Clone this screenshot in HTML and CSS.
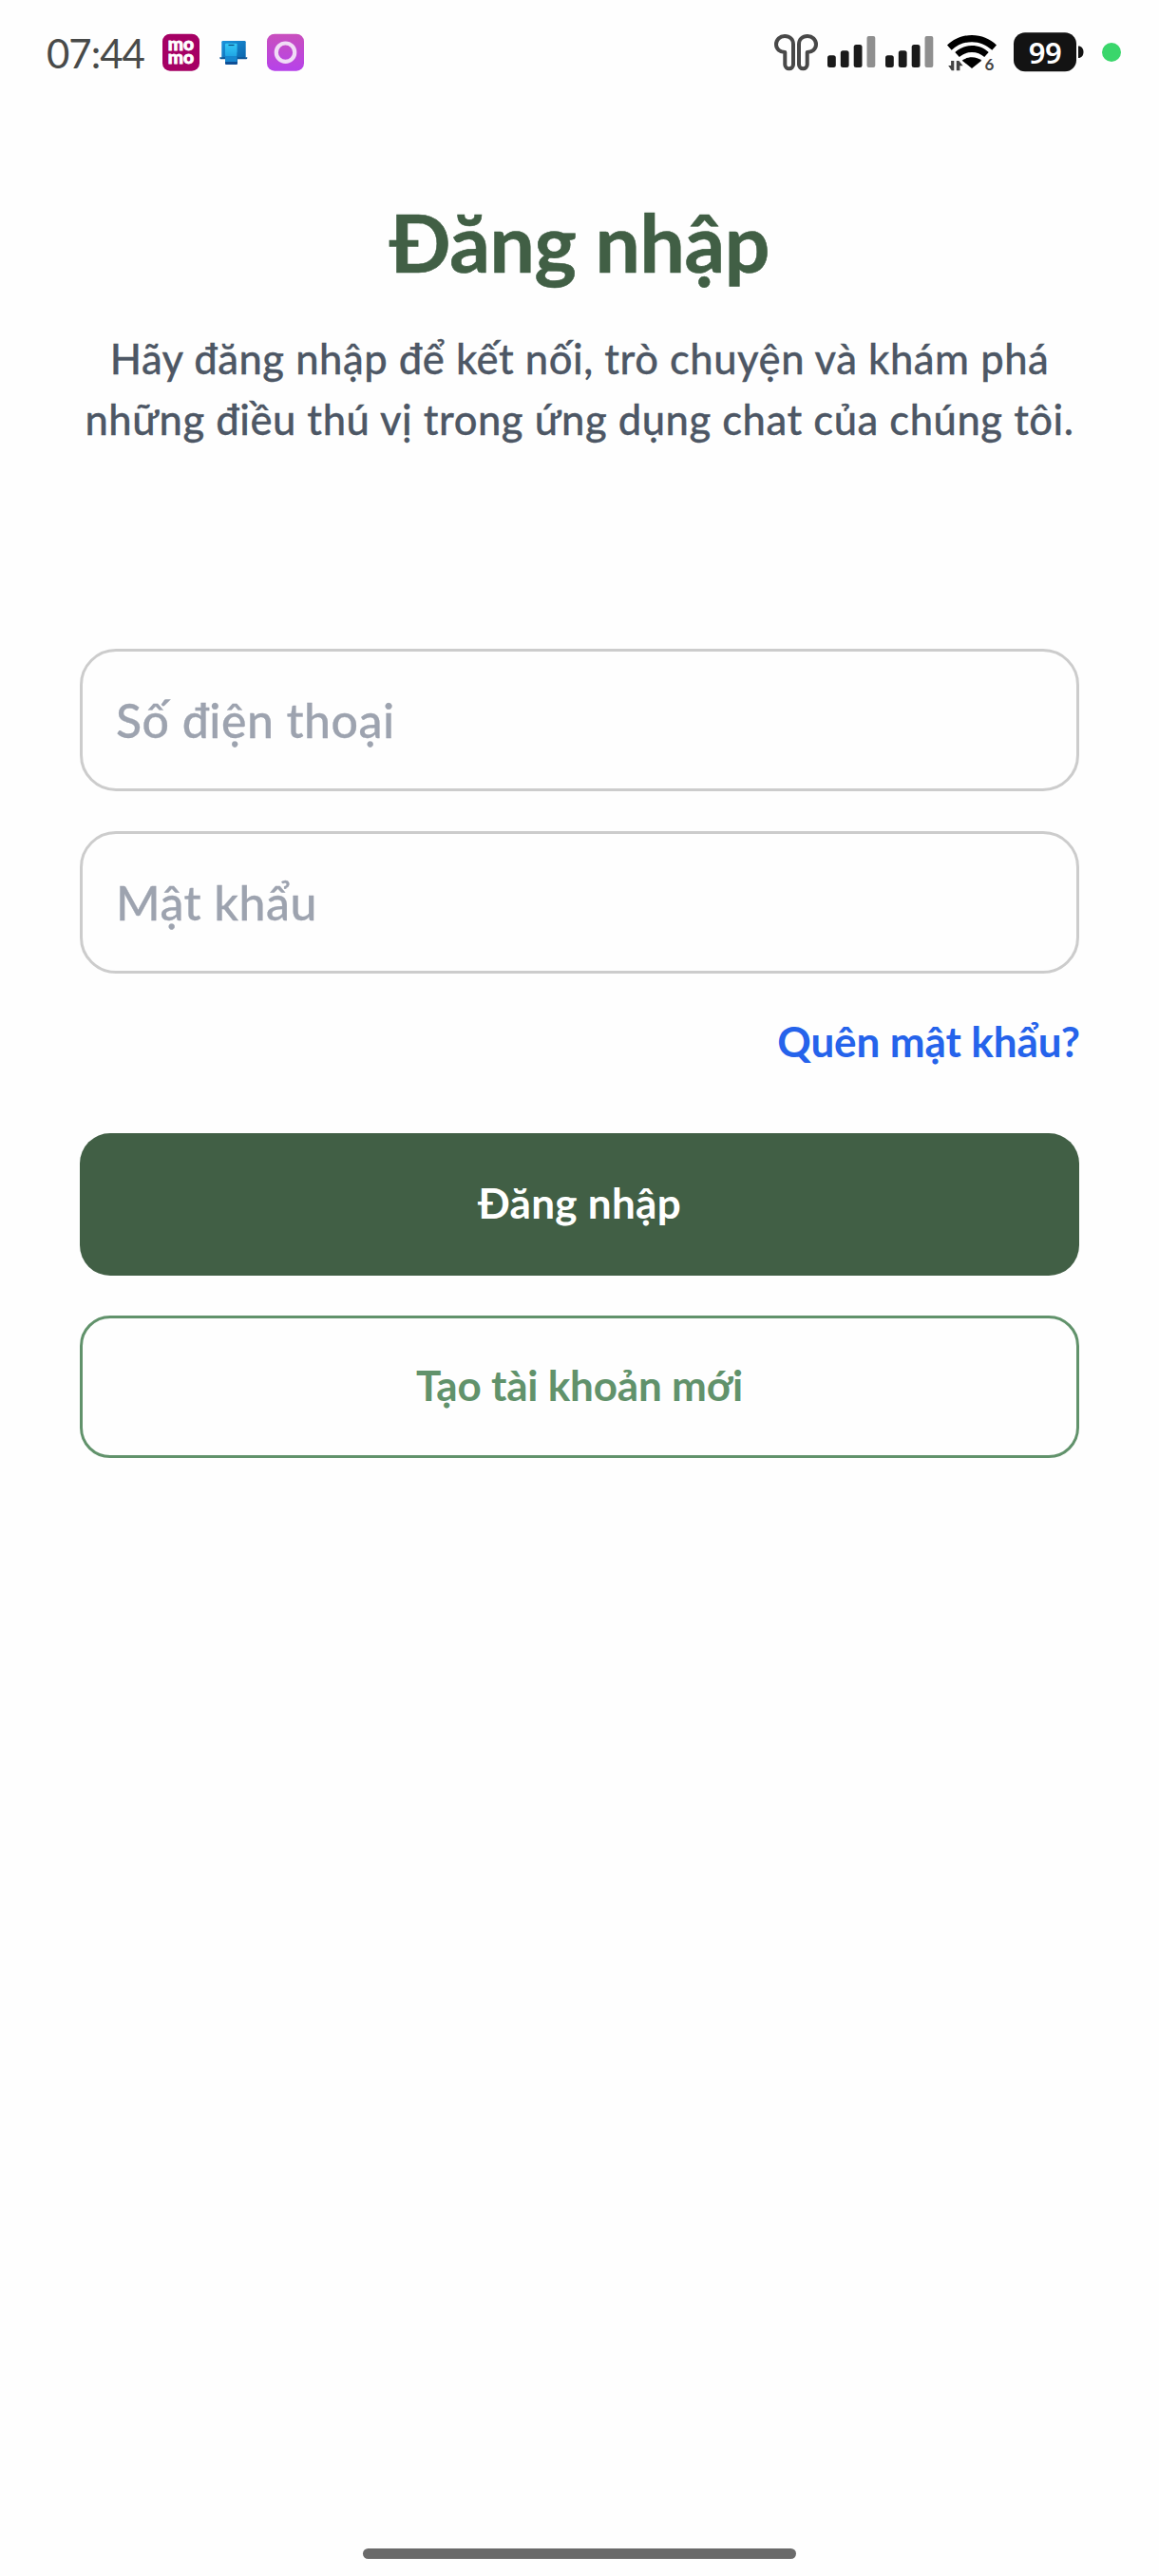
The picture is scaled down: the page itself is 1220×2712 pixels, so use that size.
FILE: index.html
```
<!DOCTYPE html>
<html lang="vi">
<head>
<meta charset="utf-8">
<title>Đăng nhập</title>
<link rel="stylesheet" href="styles.css">
</head>
<body>
<div class="screen">
  <header class="status">
    <div class="status-left">
      <span class="clock">07:44</span>
      <svg class="app" width="39" height="40" viewBox="0 0 39 40">
        <rect y=".7" width="39" height="39" rx="8" fill="#a50064"/>
        <g class="momo"><text x="5.8" y="18" textLength="27.4" lengthAdjust="spacingAndGlyphs">mo</text><text x="5.8" y="31.8" textLength="27.4" lengthAdjust="spacingAndGlyphs">mo</text></g>
      </svg>
      <svg class="app" width="39" height="40" viewBox="0 0 39 40">
        <defs>
          <linearGradient id="lap" x1="0" y1="0" x2="1" y2="1"><stop offset="0" stop-color="#1a93dc"/><stop offset="1" stop-color="#0b66ad"/></linearGradient>
          <linearGradient id="pho" x1="0" y1="0" x2="0" y2="1"><stop offset="0" stop-color="#35c8f6"/><stop offset="1" stop-color="#20a5e4"/></linearGradient>
        </defs>
        <rect x="7.3" y="8" width="25.4" height="18" rx="1.2" fill="url(#lap)"/>
        <path d="M5.3 25.3h29v.8a1.2 1.2 0 0 1-1.2 1.2H6.5a1.2 1.2 0 0 1-1.2-1.2z" fill="#0c5596"/>
        <rect x="11" y="20" width="13" height="13" rx="1" fill="#0e4f96"/>
        <rect x="11" y="10.7" width="12.6" height="13.6" rx="1" fill="url(#pho)"/>
        <path d="M11 24h12.6v6H11z" fill="#1787cf"/>
        <path d="M14.5 12.5h6" stroke="#0d4b80" stroke-width="1.2"/>
      </svg>
      <svg class="app" width="39" height="40" viewBox="0 0 39 40">
        <defs><linearGradient id="pur" x1="0" y1="0" x2="0" y2="1"><stop offset="0" stop-color="#c94fbd"/><stop offset="1" stop-color="#b642ea"/></linearGradient></defs>
        <rect y=".7" width="39" height="39" rx="8" fill="url(#pur)"/>
        <circle cx="19.5" cy="20.2" r="9.7" fill="none" stroke="#f0dcf6" stroke-width="4.2"/>
      </svg>
    </div>
    <div class="status-right">
      <svg class="buds" width="46" height="40" viewBox="0 0 46 40" fill="none" stroke="#484848" stroke-width="4" stroke-linejoin="round">
        <path d="M11.3 20C6 20 2 16.6 2 11.8 2 6.600 6 3 11 3c5.500 0 9 3.600 9 8.600V33a4.350 4.350 0 0 1-8.700 0z"/>
        <path d="M34.700 20C40 20 44 16.600 44 11.800 44 6.600 40 3 35 3c-5.500 0-9 3.600-9 8.600V33a4.350 4.350 0 0 0 8.700 0z"/>
      </svg>
      <svg class="signal" width="51" height="40" viewBox="0 0 51 40" fill="#1a1a1a">
        <rect y="23.300" width="8.800" height="12.700" rx="2.500"/><rect x="13.800" y="18.200" width="8.800" height="17.800" rx="2.500"/><rect x="27.700" y="12" width="8.800" height="24" rx="2.500"/><rect x="41.500" y="3" width="8.800" height="33" rx="2" fill="#8f8f8f"/>
      </svg>
      <svg class="signal" width="51" height="40" viewBox="0 0 51 40" fill="#1a1a1a">
        <rect y="23.300" width="8.800" height="12.700" rx="2.500"/><rect x="13.800" y="18.200" width="8.800" height="17.800" rx="2.500"/><rect x="27.700" y="12" width="8.800" height="24" rx="2.500"/><rect x="41.500" y="3" width="8.800" height="33" rx="2" fill="#8f8f8f"/>
      </svg>
      <svg class="wifi" width="52" height="40" viewBox="0 0 52 40">
        <path d="M26 2C16 2 7 5.800 0 12.500l4.700 5.300C10.500 12.300 18 9.200 26 9.200s15.500 3.100 21.300 8.600l4.700-5.300C45 5.800 36 2 26 2z"/>
        <path d="M26 13c-6.800 0-13 2.600-17.700 7l4.500 5.100C16.300 21.900 21 20 26 20s9.700 1.900 13.200 5.100l4.500-5.100C39 15.600 32.800 13 26 13z"/>
        <path d="M26 25.200c-4.200 0-7.500 1.300-10.300 3.500L26 37l10.300-8.300c-2.800-2.200-6.100-3.500-10.300-3.500z"/>
        <path d="M7.300 29v10.200H4.700L1.200 34h2.900v-5zM9.800 39.200V29h2.600l4.300 5.200h-3.300v5z" fill="#444"/>
        <text class="wifi-gen" x="39.500" y="39.200">6</text>
      </svg>
      <svg class="battery" width="74" height="42" viewBox="0 0 74 42">
        <rect x="0" y=".2" width="66" height="41" rx="12" fill="#131313"/>
        <path d="M68 14.500c3.400 0 5.500 2.500 5.500 6.300s-2.100 6.300-5.500 6.300z" fill="#131313"/>
        <text class="battery-level" x="33" y="32.500" text-anchor="middle">99</text>
      </svg>
      <span class="privacy-dot"></span>
    </div>
  </header>

  <main class="content">
    <h1 class="title">Đăng nhập</h1>
    <p class="intro">Hãy đăng nhập để kết nối, trò chuyện và khám phá<br>những điều thú vị trong ứng dụng chat của chúng tôi.</p>
    <form class="form">
      <input class="field" type="tel" placeholder="Số điện thoại">
      <input class="field password" type="password" placeholder="Mật khẩu">
      <a class="forgot">Quên mật khẩu?</a>
      <button class="btn primary" type="button">Đăng nhập</button>
      <button class="btn outline" type="button">Tạo tài khoản mới</button>
    </form>
  </main>
  <div class="home-bar"></div>
</div>
</body>
</html>
```
FILE: styles.css
```
* { box-sizing: border-box; }
body { margin: 0; background: #fefefe; font-family: Lato, "Noto Sans", sans-serif; }
.screen { display: flex; flex-direction: column; width: 1220px; height: 2712px; }
svg { display: block; flex: none; overflow: visible; }

.status { display: flex; justify-content: space-between; align-items: center; height: 110px; padding: 0 40px 0 49px; }
.status-left, .status-right { display: flex; align-items: center; }
.clock { width: 122px; padding-top: 2px; font-size: 42px; line-height: 50px; letter-spacing: -1px; color: #484a49; white-space: nowrap; }
.app { margin-right: 16px; }
.momo { font: 900 19.5px Lato, sans-serif; fill: #fff; stroke: #fff; stroke-width: .8px; }
.buds { margin-right: 10px; }
.signal { margin-right: 10px; }
.wifi { margin: 0 18px 0 4px; }
.wifi-gen { font: 700 17px Lato, sans-serif; fill: #444; }
.battery-level { font: 600 31px "Noto Sans", sans-serif; fill: #fff; letter-spacing: -.5px; }
.privacy-dot { width: 20px; height: 20px; margin-left: 19px; border-radius: 50%; background: #3ad66b; }

.content { padding: 94px 84px 0; }
.title { margin: 0; font-size: 84px; line-height: 101px; font-weight: 700; letter-spacing: -.4px; text-align: center; color: #415f45; -webkit-text-stroke: .6px #415f45; }
.intro { margin: 41px -20px 0; font-size: 43.500px; line-height: 63.500px; font-weight: 500; letter-spacing: .55px; text-align: center; color: #4d5765; white-space: nowrap; -webkit-text-stroke: .3px #4d5765; }
.form { display: flex; flex-direction: column; margin-top: 210px; }
.field { height: 150px; padding: 0 35px; border: 3px solid #ccc; border-radius: 38px; background: transparent; font: 500 50px Lato, sans-serif; letter-spacing: .5px; color: #4d5765; }
.field::placeholder { color: #9da3af; opacity: 1; -webkit-text-stroke: .3px #9da3af; }
.password { margin-top: 42px; }
.forgot { align-self: flex-end; margin: 41px -1px 0 0; font-size: 44px; line-height: 60px; font-weight: 700; letter-spacing: -.1px; color: #2563eb; }
.btn { height: 150px; padding: 0 0 5px; border: 0; border-radius: 32px; font: 700 44px Lato, sans-serif; }
.primary { margin-top: 67px; background: #415f45; color: #fff; letter-spacing: .3px; }
.outline { margin-top: 42px; border: 3px solid #61926b; background: transparent; color: #61926b; letter-spacing: -.2px; }

.home-bar { width: 456px; height: 11px; margin: auto auto 18px; border-radius: 6px; background: #6a6a6a; }
```
